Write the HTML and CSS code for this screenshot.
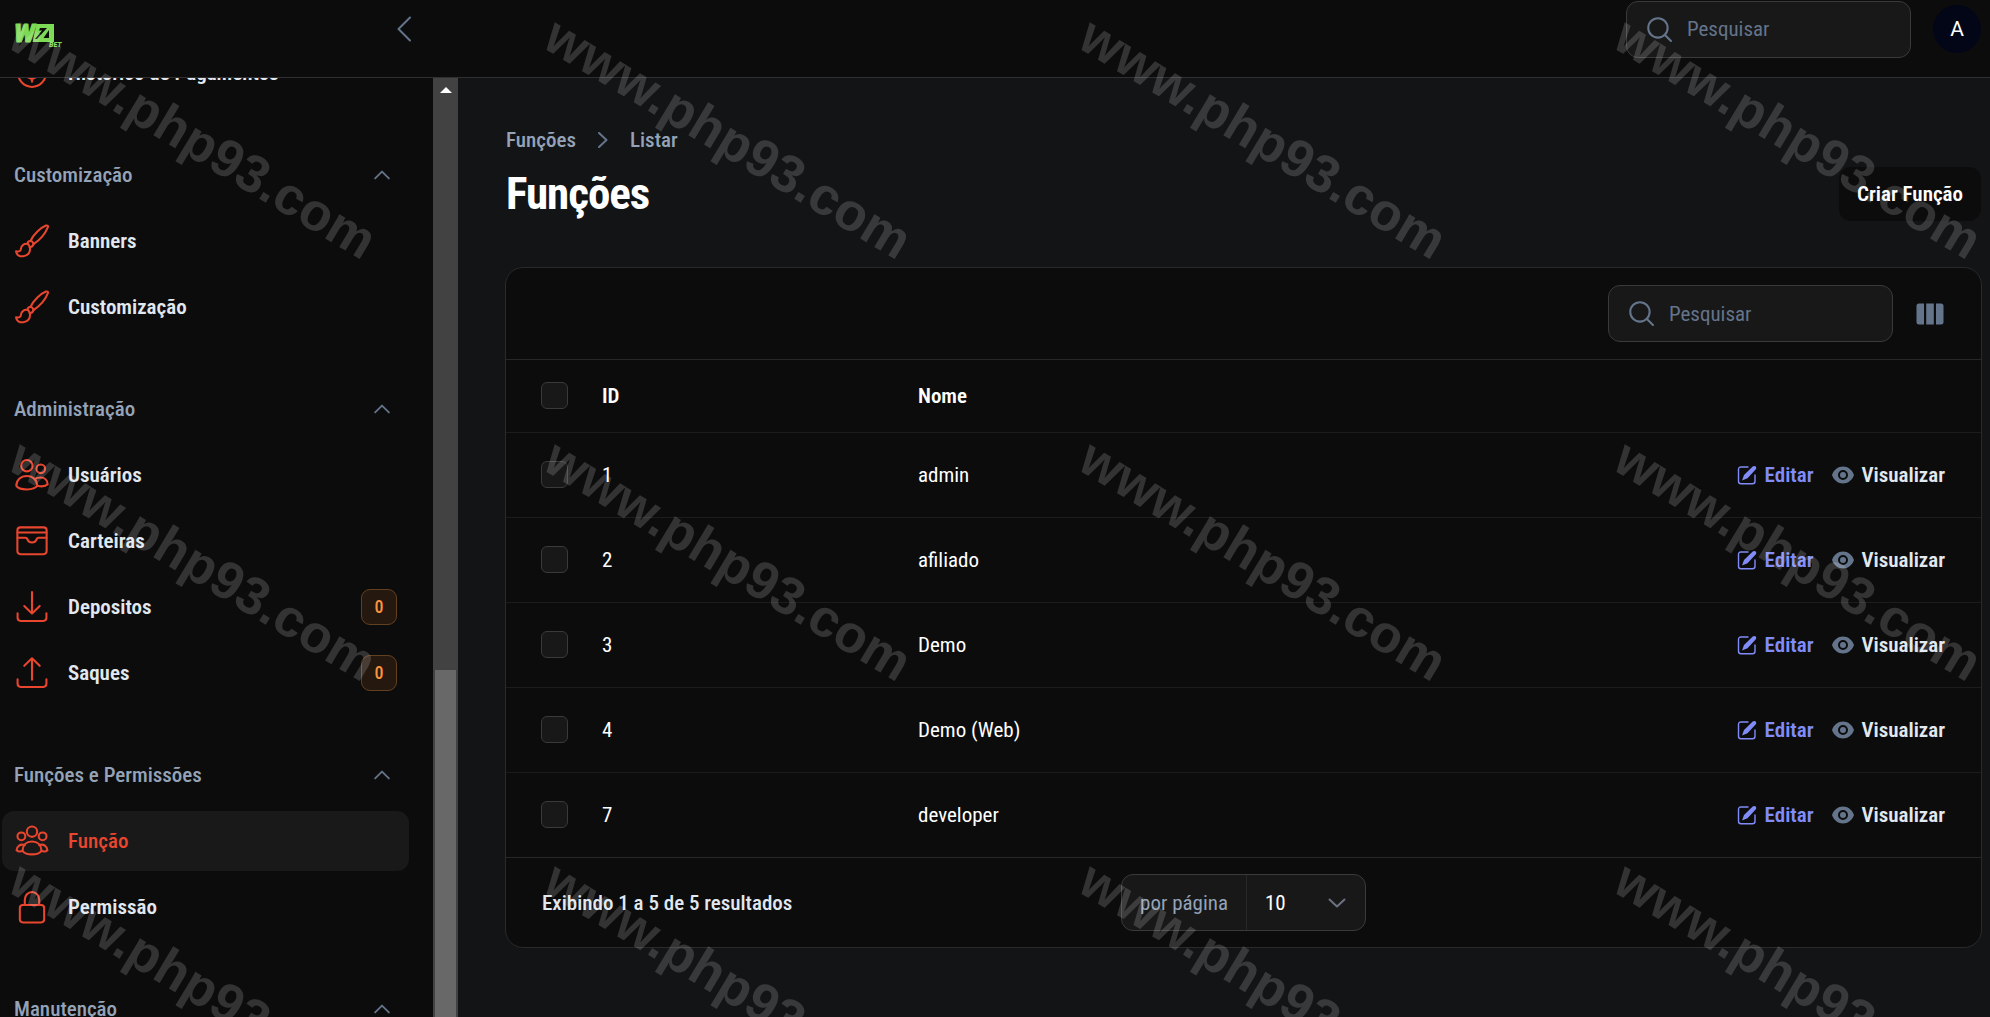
FILE: index.html
```html
<!DOCTYPE html>
<html lang="pt-BR">
<head>
    <meta charset="UTF-8">
    <meta name="viewport" content="width=device-width, initial-scale=1.0">
    <title>Funções</title>
    <link rel="stylesheet" href="styles.css">
</head>
<body>
    <svg class="sprite" aria-hidden="true">
        <symbol id="i-up" viewBox="0 0 24 24"><path d="M4.5 15.75 12 8.25l7.5 7.5"/></symbol>
        <symbol id="i-search" viewBox="0 0 24 24"><circle cx="10.5" cy="10.5" r="9.3"/><path d="m17.2 17.2 5.8 5.8"/></symbol>
        <symbol id="i-brush" viewBox="0 0 33 33">
            <path d="M15 16.5C18 10 25 3.5 30 1.500C32 1 32.500 2 31.500 4C29 10 24 15.500 18 19.500C17.500 17.500 16.500 16.500 15 16.500Z"/>
            <path d="M15 16.500C12.800 16.500 12 18 12.500 19.500M18 19.500C17.500 21.500 16 22.500 14.200 22.200"/>
            <path d="M12.500 19.500C9 18.500 6 20.800 5.800 24C5.600 26.300 3.800 27.300 1 26.500C1.200 30 4.500 31.700 8 31.300C12.500 31 15 27.500 14.500 23.500C14.200 21.500 13.600 20 12.500 19.500Z"/>
        </symbol>
        <symbol id="i-users" viewBox="0 0 33 33">
            <circle cx="11.500" cy="7.500" r="5.500"/><circle cx="25" cy="10.500" r="4.200"/>
            <path d="M1.300 27C1.300 21.500 5.500 17.500 11.500 17.500S21.500 21.500 21.500 27C20 29.500 16 30.500 11.500 30.500S2.500 29.500 1.300 27Z"/>
            <path d="M19 20.500C21 19.300 23 19 25 19C29 19 31.500 22 31.700 25.500C30 27.300 26 28 21.500 27"/>
        </symbol>
        <symbol id="i-wallet" viewBox="0 0 33 33">
            <rect x="2.300" y="3.300" width="28.400" height="26" rx="3"/>
            <path d="M2.500 8.300h28M2.500 13.300h7.500q1.800 0 2.100 1.800a4.500 3.500 0 0 0 8.800 0q.3-1.800 2.100-1.800h7.500"/>
        </symbol>
        <symbol id="i-down-tray" viewBox="0 0 33 33"><path d="M16.500 2v20.500M9 15.500l7.500 7.300 7.500-7.300M2.500 22.500V27q0 3 3 3h22q3 0 3-3v-4.500"/></symbol>
        <symbol id="i-up-tray" viewBox="0 0 33 33"><path d="M16.500 23V2.500M9 9.500l7.500-7.300L24 9.500M2.500 22.500V27q0 3 3 3h22q3 0 3-3v-4.500"/></symbol>
        <symbol id="i-group" viewBox="0 0 33 33">
            <circle cx="16.500" cy="7.500" r="5"/><circle cx="6.200" cy="12" r="3.800"/><circle cx="26.800" cy="12" r="3.800"/>
            <path d="M7.200 26C7.500 20.500 11 17 16.500 17S25.500 20.500 25.800 26C23.500 28.800 20 29.500 16.500 29.500S9.500 28.800 7.200 26Z"/>
            <path d="M9.500 20.500C5 19 2 21.500 1.500 25.500C3 27 5 27 7.500 26.300M23.500 20.500C28 19 31 21.500 31.500 25.500C30 27 28 27 25.500 26.300"/>
        </symbol>
        <symbol id="i-lock" viewBox="0 0 33 33"><rect x="4.700" y="14.500" width="23.600" height="17" rx="3"/><path d="M9.500 14.500V9.500a7 7.500 0 0 1 14 0v5"/></symbol>
        <symbol id="i-money" viewBox="0 0 33 33"><circle cx="16.500" cy="16.500" r="13.500"/><path d="M20.500 13.500c-1-2.500-8-2.500-8 0.500 0 3 8 2 8 5.500 0 3-8 3-8.500 0M16.500 8v17M12 19l4.500 4.500L21 19"/></symbol>
        <symbol id="i-edit" viewBox="0 0 20 20">
            <path class="fill" d="M17.300.900a2 2 0 0 1 2 2c0 .6-.3 1-.7 1.500L10.500 13.200 5 15.400 7 10 15.700 1.600c.5-.5 1-.7 1.600-.7Z"/>
            <path d="M11 2H4Q1.500 2 1.500 4.500v11.700q0 2.500 2.500 2.500h11.500q2.500 0 2.500-2.500V10"/>
        </symbol>
        <symbol id="i-eye" viewBox="0 0 24 20">
            <path class="fill" fill-rule="evenodd" d="M1 10C3 4.500 7 1.500 12 1.500s9 3 11 8.500c-2 5.500-6 8.500-11 8.500S3 15.500 1 10Zm16 0a5 5 0 1 0-10 0 5 5 0 0 0 10 0Z"/>
            <circle class="fill" cx="12" cy="10" r="3"/>
        </symbol>
        <symbol id="i-columns" viewBox="0 0 28 22"><path class="fill" d="M3 .5h5v21H3q-2.500 0-2.500-2.500V3Q.5.500 3 .5ZM10.200.5h7.600v21h-7.600ZM20 .5h5Q27.500.500 27.500 3v16q0 2.500-2.500 2.500h-5Z"/></symbol>
    </svg>

    <header class="topbar">
        <div class="brand">
            <a class="logo" href="#" aria-label="WZ1 Bet">
                <svg viewBox="0 0 50 26">
                    <text class="logo-w" x="-1" y="18">W</text>
                    <path d="M21.500 0H39v18H17.500Z"/>
                    <path class="logo-cut" d="M25 4h7L22 15h-2L27 6.500H24ZM34 6v8h-5.500Z"/>
                    <text class="logo-bet" x="34" y="23">BET</text>
                </svg>
            </a>
            <button class="collapse" type="button" aria-label="Recolher menu">
                <svg viewBox="0 0 14 26"><path d="M13 1.500 1.500 13 13 24.500"/></svg>
            </button>
        </div>
        <div class="topbar-end">
            <label class="search">
                <svg><use href="#i-search"/></svg>
                <input type="search" placeholder="Pesquisar" aria-label="Busca global">
            </label>
            <button class="avatar" type="button">A</button>
        </div>
    </header>

    <div class="layout">
        <aside class="sidebar">
            <nav class="nav">
                <div class="group">
                    <a class="item" href="#"><svg><use href="#i-money"/></svg><span>Histórico de Pagamentos</span></a>
                </div>
                <div class="group">
                    <button class="group-title" type="button">Customização <svg><use href="#i-up"/></svg></button>
                    <a class="item" href="#"><svg><use href="#i-brush"/></svg><span>Banners</span></a>
                    <a class="item" href="#"><svg><use href="#i-brush"/></svg><span>Customização</span></a>
                </div>
                <div class="group">
                    <button class="group-title" type="button">Administração <svg><use href="#i-up"/></svg></button>
                    <a class="item" href="#"><svg><use href="#i-users"/></svg><span>Usuários</span></a>
                    <a class="item" href="#"><svg><use href="#i-wallet"/></svg><span>Carteiras</span></a>
                    <a class="item" href="#"><svg><use href="#i-down-tray"/></svg><span>Depositos</span><b class="badge">0</b></a>
                    <a class="item" href="#"><svg><use href="#i-up-tray"/></svg><span>Saques</span><b class="badge">0</b></a>
                </div>
                <div class="group">
                    <button class="group-title" type="button">Funções e Permissões <svg><use href="#i-up"/></svg></button>
                    <a class="item active" href="#"><svg><use href="#i-group"/></svg><span>Função</span></a>
                    <a class="item" href="#"><svg><use href="#i-lock"/></svg><span>Permissão</span></a>
                </div>
                <div class="group">
                    <button class="group-title" type="button">Manutenção <svg><use href="#i-up"/></svg></button>
                </div>
            </nav>
            <div class="scrollbar">
                <div class="scroll-arrow"></div>
                <div class="scroll-thumb"></div>
            </div>
        </aside>

        <main class="main">
            <nav class="breadcrumb">
                <a href="#">Funções</a>
                <svg viewBox="0 0 10 16"><path d="m1 1 7.500 7L1 15"/></svg>
                <a href="#">Listar</a>
            </nav>
            <div class="page-head">
                <h1>Funções</h1>
                <button class="create" type="button">Criar Função</button>
            </div>

            <section class="card">
                <div class="toolbar">
                    <label class="search">
                        <svg><use href="#i-search"/></svg>
                        <input type="search" placeholder="Pesquisar" aria-label="Pesquisar na tabela">
                    </label>
                    <button class="columns" type="button" aria-label="Colunas"><svg><use href="#i-columns"/></svg></button>
                </div>
                <table>
                    <thead>
                        <tr>
                            <th class="check"><input type="checkbox" aria-label="Selecionar todos"></th>
                            <th class="id">ID</th>
                            <th>Nome</th>
                            <th></th>
                        </tr>
                    </thead>
                    <tbody>
                        <tr>
                            <td class="check"><input type="checkbox" aria-label="Selecionar 1"></td>
                            <td>1</td>
                            <td>admin</td>
                            <td><div class="actions"><a class="edit" href="#"><svg><use href="#i-edit"/></svg>Editar</a><a class="view" href="#"><svg><use href="#i-eye"/></svg>Visualizar</a></div></td>
                        </tr>
                        <tr>
                            <td class="check"><input type="checkbox" aria-label="Selecionar 2"></td>
                            <td>2</td>
                            <td>afiliado</td>
                            <td><div class="actions"><a class="edit" href="#"><svg><use href="#i-edit"/></svg>Editar</a><a class="view" href="#"><svg><use href="#i-eye"/></svg>Visualizar</a></div></td>
                        </tr>
                        <tr>
                            <td class="check"><input type="checkbox" aria-label="Selecionar 3"></td>
                            <td>3</td>
                            <td>Demo</td>
                            <td><div class="actions"><a class="edit" href="#"><svg><use href="#i-edit"/></svg>Editar</a><a class="view" href="#"><svg><use href="#i-eye"/></svg>Visualizar</a></div></td>
                        </tr>
                        <tr>
                            <td class="check"><input type="checkbox" aria-label="Selecionar 4"></td>
                            <td>4</td>
                            <td>Demo (Web)</td>
                            <td><div class="actions"><a class="edit" href="#"><svg><use href="#i-edit"/></svg>Editar</a><a class="view" href="#"><svg><use href="#i-eye"/></svg>Visualizar</a></div></td>
                        </tr>
                        <tr>
                            <td class="check"><input type="checkbox" aria-label="Selecionar 7"></td>
                            <td>7</td>
                            <td>developer</td>
                            <td><div class="actions"><a class="edit" href="#"><svg><use href="#i-edit"/></svg>Editar</a><a class="view" href="#"><svg><use href="#i-eye"/></svg>Visualizar</a></div></td>
                        </tr>
                    </tbody>
                </table>
                <div class="card-foot">
                    <span class="results">Exibindo 1 a 5 de 5 resultados</span>
                    <div class="per-page">
                        <label for="per-page">por página</label>
                        <div class="select">
                            <select id="per-page">
                                <option>5</option>
                                <option selected>10</option>
                                <option>25</option>
                                <option>50</option>
                            </select>
                            <svg viewBox="0 0 18 10"><path d="m1.500 1.500 7.500 7 7.500-7"/></svg>
                        </div>
                    </div>
                </div>
            </section>
        </main>
    </div>

    <div class="watermark" aria-hidden="true">
        <span>www.php93.com</span><span>www.php93.com</span><span>www.php93.com</span><span>www.php93.com</span>
        <span>www.php93.com</span><span>www.php93.com</span><span>www.php93.com</span><span>www.php93.com</span>
        <span>www.php93.com</span><span>www.php93.com</span><span>www.php93.com</span><span>www.php93.com</span>
    </div>
</body>
</html>
```
FILE: styles.css
```css
* {
    box-sizing: border-box;
}

body {
    margin: 0;
    height: 100vh;
    display: flex;
    flex-direction: column;
    overflow: hidden;
    background: #131416;
    color: #fff;
    font-family: "Roboto Condensed", Roboto, sans-serif;
    font-size: 21px;
    line-height: 30px;
}

a {
    color: inherit;
    text-decoration: none;
}

button, input, select {
    font: inherit;
    color: inherit;
    background: none;
    border: none;
    padding: 0;
}

button {
    cursor: pointer;
}

svg {
    display: block;
    fill: none;
    stroke: currentColor;
    stroke-width: 2;
    stroke-linecap: round;
    stroke-linejoin: round;
}

.fill {
    fill: currentColor;
    stroke: none;
}

.sprite {
    display: none;
}

/* top bar */
.topbar {
    flex: none;
    display: flex;
    justify-content: space-between;
    height: 78px;
    padding-right: 9px;
    background: #0c0c0c;
    border-bottom: 1px solid #303033;
}

.brand {
    display: flex;
    justify-content: space-between;
    align-items: center;
    width: 411px;
    height: 58px;
    padding-left: 15px;
}

.logo svg {
    width: 50px;
    height: 26px;
    margin-top: 16px;
    overflow: visible;
    fill: #7ddb56;
    stroke: none;
}

.logo-w {
    font: italic 900 25px Roboto, sans-serif;
    stroke: #7ddb56;
    stroke-width: 1;
}

.logo-bet {
    font: italic 900 7px Roboto, sans-serif;
}

.logo-cut {
    fill: #0c0c0c;
}

.collapse {
    color: #64748b;
}

.collapse svg {
    width: 14px;
    height: 26px;
}

.topbar-end {
    display: flex;
    align-items: center;
    gap: 22px;
    height: 58px;
}

.search {
    display: flex;
    align-items: center;
    gap: 15px;
    width: 285px;
    height: 57px;
    padding: 0 20px;
    background: #181818;
    border: 1px solid #3a3a3c;
    border-radius: 12px;
    color: #64748b;
}

.search svg {
    flex: none;
    width: 25px;
    height: 25px;
}

.search input {
    min-width: 0;
    flex: 1;
    outline: none;
    appearance: none;
}

.search input::placeholder {
    color: #64748b;
    opacity: 1;
}

.avatar {
    width: 48px;
    height: 48px;
    border-radius: 50%;
    background: #020617;
    font-family: Roboto, sans-serif;
}

/* sidebar */
.layout {
    flex: 1;
    display: flex;
    min-height: 0;
}

.sidebar {
    flex: none;
    display: flex;
    width: 458px;
    overflow: hidden;
    background: #0c0c0c;
}

.nav {
    flex: 1;
    display: flex;
    flex-direction: column;
    gap: 42px;
    /* list is scrolled past its first entries */
    margin-top: -35px;
    padding: 0 24px 0 2px;
}

.group {
    display: flex;
    flex-direction: column;
    gap: 6px;
}

.group-title {
    display: flex;
    align-items: center;
    justify-content: space-between;
    height: 60px;
    padding: 0 16px 0 12px;
    color: #94a3b8;
    font-weight: 500;
}

.group-title svg {
    width: 22px;
    height: 22px;
    color: #64748b;
}

.item {
    display: flex;
    align-items: center;
    gap: 19px;
    height: 60px;
    padding: 0 12px 0 13px;
    border-radius: 12px;
    color: #e2e8f0;
    font-weight: 600;
}

.item svg {
    width: 34px;
    height: 34px;
    color: #e8462f;
}

.item.active {
    background: #191919;
    color: #e8462f;
    font-weight: 500;
}

.badge {
    display: flex;
    align-items: center;
    justify-content: center;
    width: 36px;
    height: 36px;
    margin-left: auto;
    background: #24180f;
    border: 1px solid #63401f;
    border-radius: 9px;
    color: #fb923c;
    font-size: 18px;
    font-weight: 500;
}

.scrollbar {
    display: flex;
    flex-direction: column;
    width: 25px;
    padding: 0 2px;
    background: #424242;
}

.scroll-arrow {
    align-self: center;
    margin-top: 9px;
    border: 6px solid transparent;
    border-top: 0;
    border-bottom-color: #fff;
}

.scroll-thumb {
    height: 37%;
    margin-top: auto;
    background: #686868;
}

/* content */
.main {
    flex: 1;
    min-width: 0;
    padding: 47px 8px 0 47px;
}

.breadcrumb {
    display: flex;
    align-items: center;
    gap: 21px;
    padding-left: 1px;
    color: #94a3b8;
    font-weight: 500;
}

.breadcrumb svg {
    width: 12px;
    height: 16px;
    color: #64748b;
}

.page-head {
    display: flex;
    align-items: center;
    justify-content: space-between;
    margin: 9px 0 43px;
    padding: 0 1px;
}

h1 {
    margin: 0;
    font-size: 45px;
    line-height: 60px;
    font-weight: 700;
    letter-spacing: -1px;
}

.create {
    height: 54px;
    padding: 0 18px;
    background: #0c0c0c;
    border-radius: 12px;
    font-weight: 600;
}

.card {
    background: #0c0c0c;
    border: 1px solid #2a2a2d;
    border-radius: 18px;
}

.toolbar {
    display: flex;
    justify-content: flex-end;
    align-items: center;
    gap: 23px;
    padding: 17px 37px 17px 0;
    border-bottom: 1px solid #27272a;
}

.columns {
    color: #64748b;
}

.columns svg {
    width: 28px;
    height: 22px;
}

table {
    width: 100%;
    border-collapse: collapse;
    table-layout: fixed;
}

th {
    height: 72px;
    padding: 0 18px;
    text-align: left;
    font-weight: 600;
}

td {
    height: 85px;
    padding: 0 18px;
    border-top: 1px solid #1c1c1e;
}

th:last-child, td:last-child {
    padding-right: 36px;
}

.check {
    width: 78px;
    padding: 0 0 0 35px;
}

.id {
    width: 316px;
}

input[type="checkbox"] {
    display: block;
    appearance: none;
    width: 27px;
    height: 27px;
    margin: 0;
    background: #181818;
    border: 1px solid #3a3a3c;
    border-radius: 6px;
}

.actions {
    display: flex;
    justify-content: flex-end;
    gap: 18px;
    font-weight: 600;
}

.actions a {
    display: flex;
    align-items: center;
}

.edit {
    gap: 8px;
    color: #818cf8;
}

.edit svg {
    width: 20px;
    height: 20px;
    stroke-width: 1.4;
}

.view {
    gap: 6px;
    color: #e2e8f0;
}

.view svg {
    width: 24px;
    height: 20px;
    color: #64748b;
}

.card-foot {
    display: grid;
    grid-template-columns: 1fr auto 1fr;
    align-items: center;
    padding: 16px 36px;
    border-top: 1px solid #27272a;
}

.results {
    color: #e2e8f0;
    font-weight: 500;
}

.per-page {
    display: flex;
    align-items: center;
    height: 57px;
    background: #181818;
    border: 1px solid #3a3a3c;
    border-radius: 12px;
}

.per-page label {
    padding: 0 18px;
    color: #94a3b8;
}

.select {
    display: grid;
    align-items: center;
    width: 119px;
    height: 100%;
    border-left: 1px solid #27272a;
}

.select > * {
    grid-area: 1 / 1;
}

.select select {
    height: 100%;
    padding-left: 18px;
    appearance: none;
    outline: none;
}

.select svg {
    justify-self: end;
    width: 18px;
    height: 10px;
    margin-right: 19px;
    color: #6b7280;
    pointer-events: none;
}

/* repeated mark over the whole window */
.watermark {
    position: absolute;
    inset: 0;
    display: grid;
    grid-template-columns: repeat(4, 535px);
    grid-auto-rows: 422px;
    overflow: hidden;
    pointer-events: none;
    color: rgba(255, 255, 255, 0.16);
    font: bold 53px/60px "Liberation Sans", Arial, sans-serif;
}

.watermark {
    padding-top: 4px;
}

.watermark span {
    padding-left: 14px;
    transform: rotate(31deg);
    transform-origin: 20px 30px;
    white-space: nowrap;
}
```
